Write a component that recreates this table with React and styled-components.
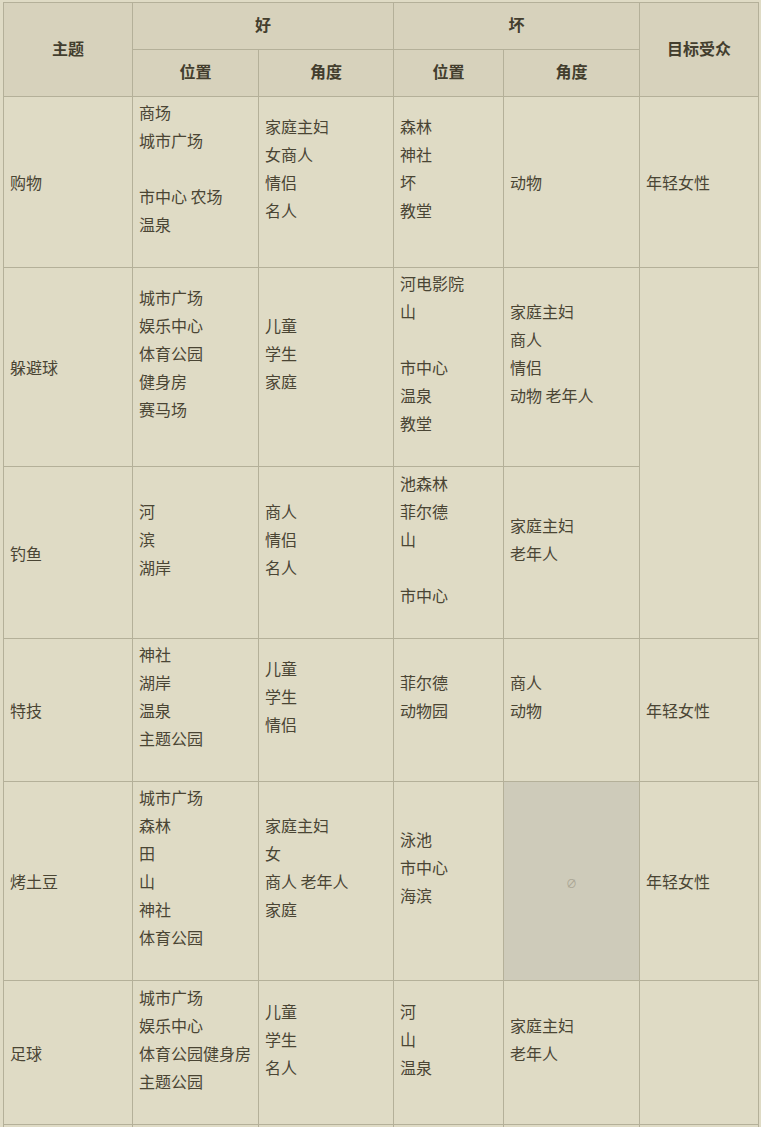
import React from "react";
import styled, { createGlobalStyle } from "styled-components";

const GlobalStyle = createGlobalStyle`
  html, body {
    margin: 0;
    padding: 0;
    background: #dfdbc5;
  }
  body {
    font-family: "Noto Sans CJK SC", "Noto Sans", sans-serif;
    color: #4a4534;
  }
`;

const Page = styled.div`
  padding: 2px 0 0 3px;
`;

const Table = styled.table`
  width: 755px;
  table-layout: fixed;
  border-collapse: collapse;
  border: 1px solid #b4b099;
  font-size: 16px;
`;

const Row = styled.tr`
  height: ${({ $height }) => ($height ? `${$height}px` : "auto")};
`;

const Th = styled.th`
  background: #d7d2bc;
  border: 1px solid #b4b099;
  padding: 7px 6px 11px;
  line-height: 28px;
  font-weight: 700;
  color: #433e2e;
  text-align: center;
  vertical-align: middle;
`;

const Td = styled.td`
  background: ${({ $empty }) => ($empty ? "#cecbba" : "#dfdbc5")};
  border: 1px solid #b4b099;
  padding: 1px 6px;
  vertical-align: middle;
  text-align: ${({ $empty }) => ($empty ? "center" : "left")};
`;

const Line = styled.div`
  line-height: 28px;
  min-height: 28px;
  white-space: nowrap;
`;

const EmptyMark = styled.span`
  font-size: 11px;
  color: #aaa694;
`;

const rows = [
  {
    topic: "购物",
    goodPlace: ["商场", "城市广场", "", "市中心 农场", "温泉", ""],
    goodAngle: ["家庭主妇", "女商人", "情侣", "名人", ""],
    badPlace: ["森林", "神社", "坏", "教堂", ""],
    badAngle: ["动物"],
    audience: ["年轻女性"],
  },
  {
    topic: "躲避球",
    goodPlace: ["城市广场", "娱乐中心", "体育公园", "健身房", "赛马场", ""],
    goodAngle: ["儿童", "学生", "家庭", ""],
    badPlace: ["河电影院", "山", "", "市中心", "温泉", "教堂", ""],
    badAngle: ["家庭主妇", "商人", "情侣", "动物 老年人", ""],
    audience: [],
    audienceSpan: 2,
  },
  {
    topic: "钓鱼",
    height: 172,
    goodPlace: ["河", "滨", "湖岸", ""],
    goodAngle: ["商人", "情侣", "名人", ""],
    badPlace: ["池森林", "菲尔德", "山", "", "市中心", ""],
    badAngle: ["家庭主妇", "老年人", ""],
    audience: null,
  },
  {
    topic: "特技",
    goodPlace: ["神社", "湖岸", "温泉", "主题公园", ""],
    goodAngle: ["儿童", "学生", "情侣", ""],
    badPlace: ["菲尔德", "动物园", ""],
    badAngle: ["商人", "动物", ""],
    audience: ["年轻女性"],
  },
  {
    topic: "烤土豆",
    goodPlace: ["城市广场", "森林", "田", "山", "神社", "体育公园", ""],
    goodAngle: ["家庭主妇", "女", "商人 老年人", "家庭", ""],
    badPlace: ["泳池", "市中心", "海滨", ""],
    badAngle: null,
    audience: ["年轻女性"],
  },
  {
    topic: "足球",
    height: 144,
    goodPlace: ["城市广场", "娱乐中心", "体育公园健身房", "主题公园", ""],
    goodAngle: ["儿童", "学生", "名人", ""],
    badPlace: ["河", "山", "温泉", ""],
    badAngle: ["家庭主妇", "老年人", ""],
    audience: [],
  },
  {
    topic: "",
    goodPlace: ["", "", "", ""],
    goodAngle: [""],
    badPlace: [""],
    badAngle: [""],
    audience: [],
  },
];

const Cell = ({ lines, rowSpan }) => {
  if (lines === null) {
    return (
      <Td $empty rowSpan={rowSpan}>
        <EmptyMark>∅</EmptyMark>
      </Td>
    );
  }
  return (
    <Td rowSpan={rowSpan}>
      {lines.map((text, i) => (
        <Line key={i}>{text}</Line>
      ))}
    </Td>
  );
};

export default function App() {
  return (
    <Page>
      <GlobalStyle />
      <Table>
        <colgroup>
          <col style={{ width: 129 }} />
          <col style={{ width: 126 }} />
          <col style={{ width: 135 }} />
          <col style={{ width: 110 }} />
          <col style={{ width: 136 }} />
          <col style={{ width: 119 }} />
        </colgroup>
        <thead>
          <tr>
            <Th rowSpan={2}>主题</Th>
            <Th colSpan={2}>好</Th>
            <Th colSpan={2}>坏</Th>
            <Th rowSpan={2}>目标受众</Th>
          </tr>
          <tr>
            <Th>位置</Th>
            <Th>角度</Th>
            <Th>位置</Th>
            <Th>角度</Th>
          </tr>
        </thead>
        <tbody>
          {rows.map((row, i) => (
            <Row key={i} $height={row.height}>
              <Cell lines={[row.topic]} />
              <Cell lines={row.goodPlace} />
              <Cell lines={row.goodAngle} />
              <Cell lines={row.badPlace} />
              <Cell lines={row.badAngle} />
              {row.audience !== null && (
                <Cell lines={row.audience} rowSpan={row.audienceSpan} />
              )}
            </Row>
          ))}
        </tbody>
      </Table>
    </Page>
  );
}
